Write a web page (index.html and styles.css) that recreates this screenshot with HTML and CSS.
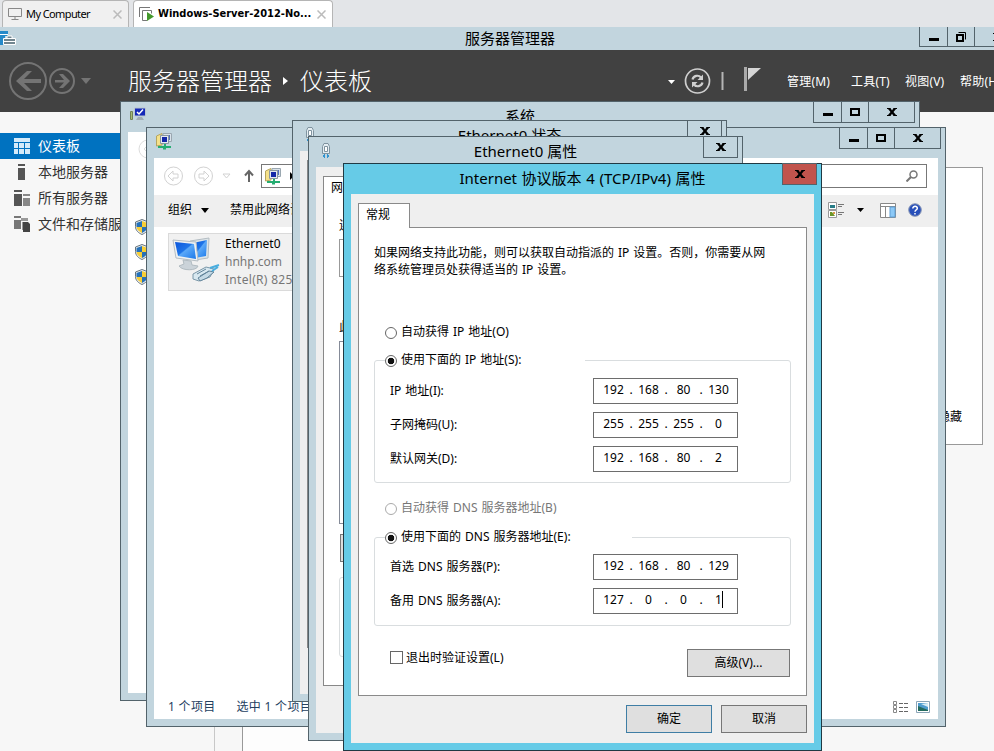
FILE: index.html
```html
<!DOCTYPE html>
<html lang="zh-CN">
<head>
  <meta charset="UTF-8">
  <title>服务器管理器</title>
  <link rel="stylesheet" href="styles.css">
</head>
<body>
<svg class="defs" width="0" height="0">
  <symbol id="shield" viewBox="0 0 14 16">
    <path d="M7 .5 13.5 3v4.5c0 4-3 6.500-6.500 8-3.500-1.500-6.500-4-6.500-8V3z" fill="#e8edf0" stroke="#66747d"/>
    <path d="M7 2v6H1.500V4z" fill="#2671b8"/><path d="M7 2v6h5.500V4z" fill="#f7ce35"/>
    <path d="M1.500 8H7v6C4 12.500 2 11 1.500 8z" fill="#f7ce35"/><path d="M12.500 8H7v6c3-1.500 5-3 5.500-6z" fill="#2671b8"/>
  </symbol>
  <symbol id="min" viewBox="0 0 10 10"><path d="M0 6h10v3H0z"/></symbol>
  <symbol id="max" viewBox="0 0 10 10"><path d="M1 2h8v6H1z" fill="none" stroke="#000" stroke-width="2"/></symbol>
  <symbol id="close" viewBox="0 0 10 10"><path d="M0 1h3.500L5 3.400 6.500 1H10v1H9L6.500 5 9 8h1v1H6.500L5 6.700 3.500 9H0V8h1l2.500-3L1 2H0z"/></symbol>
  <symbol id="netfolder" viewBox="0 0 16 17">
    <path d="M.5 3 6 .5V12L.5 13z" fill="#f5e18a" stroke="#b6a55d"/>
    <path d="M7 .5h8.500v8H7z" fill="#d9e2ea" stroke="#9aa7b0"/><path d="M9 2h5v5H9z" fill="#5572bd"/>
    <path d="M4.500 2.500h8v8h-8z" fill="#e4eaf0" stroke="#8a97a0"/><path d="M6 4h5v5H6z" fill="#1428a8"/>
    <path d="M8 11h2v2h5v2h-5v1.500H7V15H2v-2h6z" fill="#25ad72"/>
  </symbol>
  <symbol id="plug" viewBox="0 0 10 16">
    <path d="M1.500 3.500 3 .5h4l1.500 3v7h-7z" fill="#e4edf2" stroke="#7f939f"/><path d="M3.500 3.500h3v5h-3z" fill="#fff" stroke="#7f939f"/>
    <path d="M2 12h2v2H2zM6 12h2v2H6zM3 11h1v4H3zM6 11h1v4H6z" fill="#2f93d0"/>
  </symbol>
</svg>

<div class="tabs">
  <div class="tab tab-computer">
    <svg width="14" height="12" viewBox="0 0 14 12"><path d="M.5.5h13v8H.5zM7 9v2M3.500 11.500h7" fill="none" stroke="#888"/></svg>
    <span>My Computer</span>
    <svg class="tab-x" width="9" height="9" viewBox="0 0 9 9"><path d="m.5.5 8 8m0-8-8 8" stroke="#bbb" stroke-width="1.500"/></svg>
  </div>
  <div class="tab tab-active">
    <svg width="15" height="14" viewBox="0 0 15 14"><path d="M.5 10V.5H11M10 3.500H3.500v10H8M12.500 3.500v3M10 3.500h2.500" fill="none" stroke="#777"/><path d="m8 5 7 4.500L8 14z" fill="#43982b"/></svg>
    <span>Windows-Server-2012-No...</span>
    <svg class="tab-x" width="9" height="9" viewBox="0 0 9 9"><path d="m.5.5 8 8m0-8-8 8" stroke="#bbb" stroke-width="1.500"/></svg>
  </div>
</div>

<div class="manager">
  <div class="manager-title">
    <svg class="manager-icon" width="16" height="16" viewBox="0 0 16 16"><path d="M0 1h8v5H5v9H0z" fill="#2589c9"/><path d="M0 4.500h8" stroke="#fff"/><path d="M3.500 8.500h12v6h-12zM7 8V6h5v2" fill="#71858f" stroke="#fff"/><path d="M4 11.500h11" stroke="#fff"/></svg>
    <span>服务器管理器</span>
    <div class="controls controls-main">
      <span class="btn-min"><svg><use href="#min"/></svg></span>
      <span class="btn-max"><svg viewBox="0 0 10 10"><path d="M1 3h6v6H1z" fill="none" stroke="#000" stroke-width="2"/><path d="M2.500.5h7v7" fill="none" stroke="#000"/></svg></span>
      <span class="btn-close"><svg><use href="#close"/></svg></span>
    </div>
  </div>
  <div class="header">
    <svg width="84" height="40" viewBox="0 0 84 40">
      <g fill="none" stroke="#747474" stroke-width="2"><circle cx="19" cy="20" r="18"/><circle cx="53" cy="20" r="12"/></g>
      <path d="M7 20 18 10h5l-8 8h17v4H15l8 8h-5zM61 20l-7-7h-4l5 6h-9v2.500h9L50 27h4z" fill="#747474"/>
      <path d="M72 17h10l-5 6z" fill="#747474"/>
    </svg>
    <h1>服务器管理器<svg class="crumb" width="6" height="8" viewBox="0 0 6 8"><path d="m0 0 5 4-5 4z" fill="#fff"/></svg>仪表板</h1>
    <div class="header-tools">
      <svg width="96" height="30" viewBox="0 0 96 30">
        <path d="M0 14h7l-3.500 4z" fill="#fff"/>
        <circle cx="29.500" cy="15" r="12" fill="none" stroke="#cfcfcf" stroke-width="1.700"/>
        <path d="M24.500 13.500c1-4 6-5 8.500-2M34.500 16.500c-1 4-6 5-8.500 2" fill="none" stroke="#cfcfcf" stroke-width="2.200"/><path d="M35 8.500V14h-5.500zM24 21.500V16h5.500z" fill="#cfcfcf"/>
        <path d="M53.500 6h2v18h-2z" fill="#b5b5b5"/>
        <path d="M76 1h3v24h-3z" fill="#aaa"/><path d="M80 2h13L80 14z" fill="#d5d5d5"/>
      </svg>
      <span class="m-manage">管理(M)</span><span class="m-tools">工具(T)</span><span class="m-view">视图(V)</span><span class="m-help">帮助(H)</span>
    </div>
  </div>
  <div class="manager-body">
    <ul class="sidebar">
      <li class="selected"><svg width="16" height="16" viewBox="0 0 16 16"><path d="M0 0h16v4H0zM0 5h4v5H0zM5 5h5v5H5zM11 5h5v5h-5zM0 11h4v5H0zM5 11h5v5H5zM11 11h5v5h-5z" fill="#d5ebfa"/></svg>仪表板</li>
      <li><svg width="16" height="16" viewBox="0 0 16 16"><path d="M4 0h7v2H4zM4 4h7v12H4z" fill="#555"/></svg>本地服务器</li>
      <li><svg width="16" height="16" viewBox="0 0 16 16"><path d="M0 0h8v2H0zM0 4h8v12H0z" fill="#555"/><path d="M9 4h7v2H9zM9 8h7v8H9z" fill="#888"/></svg>所有服务器</li>
      <li><svg width="16" height="16" viewBox="0 0 16 16"><path d="M0 0h7v2H0zM0 4h7v9H0z" fill="#777"/><path d="M7 2h7v3H7zM8 6h5v8H8z" fill="#999"/><path d="M9 6h5l2 2v8H9z" fill="#444"/></svg>文件和存储服务</li>
    </ul>
    <div class="tile-area">
      <div class="welcome">隐藏</div>
      <div class="roles"></div>
    </div>
  </div>
</div>

<div class="window system">
  <div class="titlebar">
    <svg class="win-icon" width="16" height="14" viewBox="0 0 16 14"><path d="M.5 4.500h2v8h-2z" fill="#a5bb74" stroke="#708056"/><path d="M4.500 1h11v8h-11z" fill="#1428b8" stroke="#b9c5ce"/><path d="m7 5 2 2 4-4.500" fill="none" stroke="#fff" stroke-width="1.500"/><path d="M8 10h4l2 3H6z" fill="#a1acb4"/></svg>
    <span>系统</span>
    <div class="controls">
      <span class="btn-min"><svg><use href="#min"/></svg></span><span class="btn-max"><svg><use href="#max"/></svg></span><span class="btn-close"><svg><use href="#close"/></svg></span>
    </div>
  </div>
  <div class="client system-client">
    <svg class="back-ghost" width="20" height="20" viewBox="0 0 20 20"><circle cx="10" cy="10" r="9" fill="none" stroke="#ddd"/><path d="m11 5-5 5 5 5" fill="none" stroke="#ddd"/></svg>
    <svg class="shield" width="14" height="16"><use href="#shield"/></svg>
    <svg class="shield" width="14" height="16"><use href="#shield"/></svg>
    <svg class="shield" width="14" height="16"><use href="#shield"/></svg>
  </div>
</div>

<div class="window network">
  <div class="titlebar">
    <svg class="win-icon" width="16" height="17"><use href="#netfolder"/></svg>
    <div class="controls">
      <span class="btn-min"><svg><use href="#min"/></svg></span><span class="btn-max"><svg><use href="#max"/></svg></span><span class="btn-close"><svg><use href="#close"/></svg></span>
    </div>
  </div>
  <div class="client network-client">
    <div class="address-row">
      <svg width="92" height="20" viewBox="0 0 92 20">
        <g fill="none" stroke="#d2d2d2"><circle cx="9.500" cy="10" r="9"/><circle cx="39.500" cy="10" r="9"/><path d="m9 5-5 5 5 5v-3h5V8H9zM40 5l5 5-5 5v-3h-5V8h5zM59 8h7l-3.500 4z"/></g>
        <path d="M85 16V6M81 9.500 85 5l4 4.500" fill="none" stroke="#666" stroke-width="2"/>
      </svg>
      <div class="address"><svg width="16" height="17"><use href="#netfolder"/></svg><svg width="5" height="8" viewBox="0 0 5 8"><path d="m0 0 4 4-4 4z"/></svg></div>
      <div class="search"><svg width="12" height="12" viewBox="0 0 12 12"><circle cx="7.500" cy="4.500" r="3.500" fill="none" stroke="#777" stroke-width="1.500"/><path d="m5 7-4.500 4.500" stroke="#777" stroke-width="2"/></svg></div>
    </div>
    <div class="toolbar">
      <span>组织</span>
      <svg class="drop" width="8" height="5" viewBox="0 0 8 5"><path d="M0 0h8L4 5z"/></svg>
      <span>禁用此网络设备</span>
      <div class="toolbar-right">
        <svg width="17" height="16" viewBox="0 0 17 16"><path d="M.5.500h8v7h-8zM.5 8.500h8v7h-8z" fill="#fff" stroke="#999"/><path d="M2 3h5v3H2z" fill="#277c87"/><path d="M2 10h2l3 4H2z" fill="#6b9528"/><path d="M5 10h2v2H5z" fill="#d99545"/><path d="M10 2.500h6M10 4.500h4M10 10.500h6M10 12.500h4" stroke="#777"/></svg>
        <svg class="drop-view" width="8" height="5" viewBox="0 0 8 5"><path d="M0 0h7L3.500 4z"/></svg>
        <svg class="pane" width="16" height="15" viewBox="0 0 16 15"><path d="M.5.500h15v14H.5zM.5 3.500h15M5.500 3v11" fill="#fff" stroke="#888"/><path d="M10 4h5v10h-5z" fill="#8cc9f7" stroke="#5e9ed4"/></svg>
        <svg width="14" height="14" viewBox="0 0 14 14"><circle cx="7" cy="7" r="6.300" fill="#2850ba" stroke="#8b98b5"/><path d="M4.800 5.500c0-3 4.800-2.800 4.500 0C9.200 7 7 6.800 7 8.700M7 10v1.500" fill="none" stroke="#fff" stroke-width="1.500"/></svg>
      </div>
    </div>
    <div class="files">
      <div class="adapter">
        <svg width="48" height="48" viewBox="0 0 48 48">
          <defs><linearGradient id="screen" x2="1" y2="1"><stop stop-color="#0b55dc"/><stop offset=".45" stop-color="#1d74e8"/><stop offset=".5" stop-color="#5aa8f8"/><stop offset="1" stop-color="#1b78ea"/></linearGradient></defs>
          <path d="m18 6 19-3-1 20-13 2z" fill="#dce4e8" stroke="#b4bdc3"/><path d="m21 8 14-3-1 16-11 2z" fill="url(#screen)"/>
          <path d="m1 5 23 2 2 19-22-3z" fill="#eef1f3" stroke="#b4bdc3"/><path d="m3 7 19 2 2 15-18-3z" fill="url(#screen)"/>
          <path d="m11 25 8 1 1 4 6 1c-1 5-16 5-19 0l5-2z" fill="#cbd3d9" stroke="#b1bbc1"/>
          <path d="m21 39 13-7 8 2-4 8-11 4-6-2z" fill="#d8e8f0" stroke="#7b97a8"/><path d="m26 43 11-7 5 1-7 6-7 3zM25 39l9-5M28 41l9-5" fill="#c4d9e5" stroke="#62849a"/><path d="m38 33 9-3M40 36l6-4" stroke="#4aadde" stroke-width="2"/>
        </svg>
        <div class="adapter-text"><div class="adapter-name">Ethernet0</div><div>hnhp.com</div><div class="adapter-device">Intel(R) 82574L</div></div>
      </div>
    </div>
    <div class="statusbar">
      <span>1 个项目</span><span>选中 1 个项目</span>
      <div class="view-icons">
        <svg width="15" height="12" viewBox="0 0 15 12"><path d="M.5.500h3v3h-3zM.5 4.500h3v3h-3zM.5 8.500h3v3h-3z" fill="none" stroke="#888"/><path d="M6 2.500h9M6 6.500h9M6 10.500h9" stroke="#666" stroke-dasharray="4 1"/></svg>
        <svg width="14" height="12" viewBox="0 0 14 12"><path d="M.5.500h13v11H.5z" fill="#fff" stroke="#8ba5b8"/><path d="M2 2h10v8H2z" fill="#4f9cce"/><path d="m2 5 10 4v1H2z" fill="#236b5e"/><path d="m5 3 7-1v4z" fill="#d8edf5"/></svg>
      </div>
    </div>
  </div>
</div>

<div class="window status">
  <div class="titlebar">
    <svg class="win-icon" width="10" height="16"><use href="#plug"/></svg>
    <span>Ethernet0 状态</span>
    <div class="controls"><span class="btn-small"><svg><use href="#close"/></svg></span></div>
  </div>
  <div class="client status-client"><div class="page"></div></div>
</div>

<div class="window props">
  <div class="titlebar">
    <svg class="win-icon" width="10" height="16"><use href="#plug"/></svg>
    <span>Ethernet0 属性</span>
    <div class="controls"><span class="btn-small"><svg><use href="#close"/></svg></span></div>
  </div>
  <div class="client props-client">
    <div class="page">
      <div class="props-tab">网</div>
      <div class="props-label">连</div>
      <div class="props-box"></div>
      <div class="props-label items-label">此</div>
      <div class="props-list"></div>
      <div class="props-button"></div>
      <div class="props-group"></div>
    </div>
  </div>
</div>

<div class="window tcpip">
  <div class="titlebar">
    <span>Internet 协议版本 4 (TCP/IPv4) 属性</span>
    <div class="controls"><span class="btn-small btn-red"><svg><use href="#close"/></svg></span></div>
  </div>
  <form class="client tcpip-client">
    <div class="dialog-tab">常规</div>
    <div class="dialog-page">
      <p>如果网络支持此功能，则可以获取自动指派的 IP 设置。否则，你需要从网<br>络系统管理员处获得适当的 IP 设置。</p>
      <label class="choice"><i class="radio"></i>自动获得 IP 地址(O)</label>
      <fieldset class="ip-group">
        <legend class="choice"><i class="radio checked"></i>使用下面的 IP 地址(S):</legend>
        <div class="row"><label>IP 地址(I):</label><div class="ip"><b>192</b><i>.</i><b>168</b><i>.</i><b>80</b><i>.</i><b>130</b></div></div>
        <div class="row"><label>子网掩码(U):</label><div class="ip"><b>255</b><i>.</i><b>255</b><i>.</i><b>255</b><i>.</i><b>0</b></div></div>
        <div class="row"><label>默认网关(D):</label><div class="ip"><b>192</b><i>.</i><b>168</b><i>.</i><b>80</b><i>.</i><b>2</b></div></div>
      </fieldset>
      <label class="choice disabled"><i class="radio"></i>自动获得 DNS 服务器地址(B)</label>
      <fieldset class="dns-group">
        <legend class="choice"><i class="radio checked"></i>使用下面的 DNS 服务器地址(E):</legend>
        <div class="row"><label>首选 DNS 服务器(P):</label><div class="ip"><b>192</b><i>.</i><b>168</b><i>.</i><b>80</b><i>.</i><b>129</b></div></div>
        <div class="row"><label>备用 DNS 服务器(A):</label><div class="ip"><b>127</b><i>.</i><b>0</b><i>.</i><b>0</b><i>.</i><b>1<span class="caret"></span></b></div></div>
      </fieldset>
      <div class="validate-row">
        <label><i class="checkbox"></i>退出时验证设置(L)</label>
        <button type="button" class="advanced">高级(V)...</button>
      </div>
    </div>
    <div class="actions">
      <button type="button" class="ok">确定</button>
      <button type="button">取消</button>
    </div>
  </form>
</div>
</body>
</html>
```

FILE: styles.css
```css
* {
  box-sizing: border-box;
}
body {
  position: relative;
  width: 994px;
  height: 751px;
  margin: 0;
  overflow: hidden;
  background: #f7f7f7;
  color: #000;
  font: 12px/18px "Noto Sans", "Noto Sans CJK SC", sans-serif;
  white-space: nowrap;
}
svg {
  display: block;
  flex: none;
}
.defs {
  position: absolute;
}

/* tabs */
.tabs {
  display: flex;
  gap: 4px;
  height: 27px;
  padding-left: 2px;
  background: #e3e5e8;
}
.tab {
  display: flex;
  align-items: center;
  height: 27px;
  border: 1px solid #b5b5b5;
  border-bottom: 0;
  border-radius: 4px 4px 0 0;
  background: #f0f0f0;
  font: 11px/26px "DejaVu Sans Condensed", "DejaVu Sans", sans-serif;
}
.tab-computer {
  width: 127px;
  padding: 0 6px 0 5px;
  gap: 4px;
}
.tab-computer span {
  font-family: "Noto Sans", sans-serif;
  letter-spacing: -0.6px;
}
.tab-active {
  width: 200px;
  padding: 0 6px 0 5px;
  gap: 4px;
  background: #fff;
}
.tab-active span {
  font-weight: bold;
  letter-spacing: 0;
}
.tab-x {
  margin-left: auto;
}

/* server manager */
.manager-title {
  display: flex;
  align-items: center;
  justify-content: center;
  position: relative;
  height: 23px;
  padding: 0 0 2px 26px;
  background: #c2d5de;
  font-size: 15px;
}
.manager-icon {
  position: absolute;
  left: 0;
  top: 3px;
}
.header {
  display: flex;
  align-items: center;
  height: 62px;
  padding-left: 9px;
  background: #414141;
  color: #fff;
}
.header h1 {
  display: flex;
  align-items: center;
  flex: none;
  width: 540px;
  margin: 0 0 0 35px;
  font-size: 24px;
  font-weight: 300;
  line-height: 60px;
}
.crumb {
  margin: 0 11px;
}
.header-tools {
  display: flex;
  align-items: center;
  flex: none;
}
.header-tools span {
  flex: none;
  letter-spacing: 0.2px;
  padding-top: 2px;
}
.header-tools .m-manage {
  width: 64px;
  margin-left: 23px;
}
.header-tools .m-tools {
  width: 54px;
}
.header-tools .m-view {
  width: 55px;
}
.header-tools .m-help {
  width: 35px;
  overflow: hidden;
}
.manager-body {
  display: flex;
  height: 639px;
}
.sidebar {
  width: 215px;
  margin: 0;
  padding: 21px 0 0;
  border-right: 1px solid #c8c8c8;
  list-style: none;
  color: #333;
  font-size: 14px;
}
.sidebar li {
  display: flex;
  align-items: center;
  gap: 8px;
  height: 26px;
  padding-left: 14px;
}
.sidebar .selected {
  background: #0072c0;
  color: #fff;
}
.tile-area {
  flex: 1;
  padding: 55px 11px 0 27px;
}
.welcome {
  height: 278px;
  padding: 240px 20px 0 0;
  border: 1px solid #999;
  background: #fff;
  text-align: right;
}
.roles {
  width: 580px;
  height: 306px;
  border-left: 1px solid #999;
  background: #fdfdfd;
}

/* windows */
.window {
  position: absolute;
  padding: 0 7px 7px;
  border: 1px solid #53636b;
  background: #c2d5de;
}
.titlebar {
  display: flex;
  align-items: center;
  justify-content: center;
  height: 30px;
  padding-bottom: 2px;
  font-size: 15px;
}
.win-icon {
  position: absolute;
  left: 9px;
  top: 5px;
}
.controls {
  display: flex;
  position: absolute;
  top: -1px;
  right: 4px;
  height: 22px;
  border: 1px solid #53636b;
}
.controls span {
  display: flex;
  align-items: center;
  justify-content: center;
}
.controls span + span {
  border-left: 1px solid #53636b;
}
.controls svg {
  width: 10px;
  height: 10px;
}
.btn-min {
  width: 27px;
}
.btn-max {
  width: 27px;
}
.btn-close {
  width: 46px;
}
.btn-small {
  width: 33px;
}
.btn-red {
  background: #c1544d;
}
.controls-main {
  top: 0;
  right: -28px;
  height: 20px;
  border-top: 0;
}
.controls-main .btn-close {
  width: 47px;
}
.client {
  background: #efefef;
}

.system {
  left: 120px;
  top: 101px;
  width: 800px;
  height: 600px;
}
.system-client {
  height: 561px;
  padding: 7px;
  background: #fff;
}
.back-ghost {
  margin: 0 0 60px 3px;
}
.shield {
  margin-bottom: 9px;
}

.network {
  left: 146px;
  top: 127px;
  width: 800px;
  height: 600px;
}
.network-client {
  display: flex;
  flex-direction: column;
  height: 561px;
  background: #fff;
}
.address-row {
  display: flex;
  align-items: center;
  height: 37px;
  padding: 0 11px 1px 10px;
}
.address {
  display: flex;
  align-items: center;
  gap: 9px;
  width: 380px;
  height: 24px;
  margin-left: 5px;
  padding-left: 3px;
  border: 1px solid #777;
}
.search {
  display: flex;
  align-items: center;
  justify-content: flex-end;
  flex: 1;
  height: 24px;
  margin-left: 10px;
  padding-right: 8px;
  border: 1px solid #777;
}
.toolbar {
  display: flex;
  align-items: center;
  height: 32px;
  padding: 0 16px 2px 14px;
  background: #efefef;
}
.drop {
  margin: 0 21px 0 9px;
}
.toolbar-right {
  display: flex;
  align-items: center;
  margin-left: auto;
}
.drop-view {
  margin: 0 15px 0 12px;
}
.pane {
  margin-right: 12px;
}
.files {
  flex: 1;
  padding: 6px 14px;
}
.adapter {
  display: flex;
  width: 260px;
  height: 58px;
  padding: 1px 3px;
  border: 1px solid #dadada;
  background: #f1f1f1;
  color: #777;
}
.adapter-text {
  margin-left: 5px;
}
.adapter-device {
  letter-spacing: 0.3px;
}
.adapter-name {
  color: #000;
}
.statusbar {
  display: flex;
  align-items: center;
  gap: 21px;
  height: 24px;
  padding: 0 8px 0 14px;
  color: #24405f;
  letter-spacing: 0.3px;
}
.view-icons {
  display: flex;
  gap: 8px;
  margin-left: auto;
}

.status {
  left: 292px;
  top: 120px;
  width: 435px;
  height: 582px;
}
.status-client {
  height: 543px;
  padding: 9px 7px;
}
.status .page {
  height: 488px;
  border: 1px solid #888;
}
.status .win-icon,
.props .win-icon {
  left: 12px;
  top: 6px;
}

.props {
  left: 308px;
  top: 136px;
  width: 435px;
  height: 605px;
}
.props-client {
  height: 566px;
  padding: 9px 7px;
}
.props .page {
  height: 510px;
  padding: 2px 15px;
  border: 1px solid #888;
  background: #fff;
}
.props-tab {
  margin-left: -8px;
}
.props-label {
  margin-top: 20px;
}
.props-box {
  height: 38px;
  margin-top: 4px;
  border: 1px solid #999;
}
.props .items-label {
  margin-top: 41px;
}
.props-list {
  height: 183px;
  margin-top: 5px;
  border: 1px solid #858b98;
}
.props-button {
  width: 90px;
  height: 28px;
  margin: 10px 0 0 1px;
  border: 1px solid #777;
  background: #ddd;
}
.props-group {
  height: 80px;
  margin-top: 15px;
  border: 1px solid #d9dddf;
  border-radius: 3px;
}

/* TCP/IP dialog */
.tcpip {
  left: 343px;
  top: 163px;
  width: 479px;
  height: 588px;
  border-color: #203943;
  background: #66cbe7;
}
.tcpip .titlebar span {
  word-spacing: 0.7px;
}
.tcpip-client {
  height: 549px;
  padding: 9px 7px 0;
  word-spacing: 0.9px;
}
.dialog-tab {
  position: relative;
  width: 52px;
  height: 25px;
  margin-bottom: -1px;
  padding: 2px 7px;
  border: 1px solid #8a8a8a;
  border-bottom: 0;
  background: #fff;
}
.dialog-page {
  height: 469px;
  padding: 16px 15px 0;
  border: 1px solid #8a8a8a;
  background: #fff;
}
.dialog-page p {
  margin: 0 0 45px;
  line-height: 17px;
}
.choice {
  display: flex;
  align-items: center;
  height: 18px;
  margin-left: 11px;
}
.radio {
  width: 12px;
  height: 12px;
  margin: 2px 4px 0 0;
  border: 1px solid #666;
  border-radius: 50%;
}
.checked {
  background: radial-gradient(circle, #111 3px, #fff 3.600px);
}
.disabled {
  color: #777;
}
.disabled .radio {
  border-color: #aaa;
}
fieldset {
  display: grid;
  gap: 8px;
  width: 417px;
  margin: 0;
  padding: 9px 52px 10px 15px;
  border: 1px solid #d9dddf;
  border-radius: 3px;
}
legend.choice {
  width: 200px;
  margin-left: -5px;
  padding: 0 0 1px;
}
.ip-group {
  margin: 10px 0 16px;
}
.dns-group {
  margin-top: 11px;
  padding-top: 8px;
  padding-bottom: 11px;
}
.dns-group legend {
  width: 247px;
}
.row {
  display: flex;
  align-items: center;
  justify-content: space-between;
  height: 26px;
}
.ip {
  display: grid;
  grid-template-columns: 25px 10px 25px 10px 25px 10px 25px;
  width: 145px;
  height: 26px;
  padding: 2px 7px 4px;
  border: 1px solid #6d6d6d;
  text-align: center;
}
.ip b,
.ip i {
  font-style: normal;
  font-weight: normal;
}
.caret {
  display: inline-block;
  height: 17px;
  margin-right: -1px;
  border-left: 1px solid #000;
  vertical-align: -4px;
}
.validate-row {
  display: flex;
  justify-content: space-between;
  margin-top: 23px;
  padding: 0 1px 0 16px;
}
.validate-row label {
  display: flex;
  align-items: center;
  height: 17px;
}
.checkbox {
  width: 13px;
  height: 13px;
  margin-right: 3px;
  border: 1px solid #666;
}
button {
  width: 86px;
  height: 28px;
  padding: 0;
  border: 1px solid #777;
  background: #dfdfdf;
  color: #000;
  font: inherit;
}
.advanced {
  width: 103px;
}
.ok {
  border-color: #3f7ea5;
}
.actions {
  display: flex;
  justify-content: flex-end;
  gap: 9px;
  margin-top: 9px;
}
```
